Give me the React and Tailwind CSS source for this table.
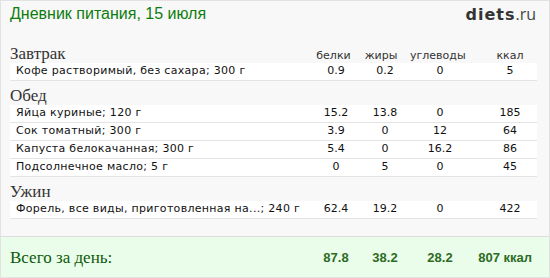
import React from "react";

const sections = [
  {
    title: "Завтрак",
    header: true,
    items: [["Кофе растворимый, без сахара; 300 г", "0.9", "0.2", "0", "5"]],
  },
  {
    title: "Обед",
    items: [
      ["Яйца куриные; 120 г", "15.2", "13.8", "0", "185"],
      ["Сок томатный; 300 г", "3.9", "0", "12", "64"],
      ["Капуста белокачанная; 300 г", "5.4", "0", "16.2", "86"],
      ["Подсолнечное масло; 5 г", "0", "5", "0", "45"],
    ],
  },
  {
    title: "Ужин",
    items: [
      ["Форель, все виды, приготовленная на...; 240 г", "62.4", "19.2", "0", "422"],
    ],
  },
];

const sans = "font-['DejaVu_Sans',sans-serif]";
const serif = "font-['Liberation_Serif',serif]";

const FoodRow = ({ item }) => (
  <div className={`h-[18px] bg-white border-b border-[#e4e4e4] flex items-center text-[11px] text-[#111] ${sans}`}>
    <div className="flex-1 pl-[6px] tracking-[0.3px] whitespace-nowrap">{item[0]}</div>
    <div className="w-[48px] text-center">{item[1]}</div>
    <div className="w-[50px] text-center">{item[2]}</div>
    <div className="w-[60px] text-center">{item[3]}</div>
    <div className="w-[67px] pl-[13px] text-center">{item[4]}</div>
  </div>
);

export default function App() {
  return (
    <div className="w-[550px] h-[278px] border border-[#e2e2e2] bg-[#f8f8f8] flex flex-col">
      {/* title + logo */}
      <div className="mt-[3px] h-[20px] flex items-center justify-between pl-[9px] pr-[13px]">
        <div className="font-['Liberation_Sans',sans-serif] text-[16px] leading-[20px] text-[#0d7d0d]">
          Дневник питания, 15 июля
        </div>
        <div className="leading-[20px] whitespace-nowrap">
          <span className="font-['DejaVu_Sans',sans-serif] font-bold text-[16px] tracking-[1px] text-[#333]">diets</span>
          <span className="font-['Open_Sans',sans-serif] text-[16px] text-[#444]">.ru</span>
        </div>
      </div>

      <div className="mt-[21px] pl-[9px] pr-[12px] flex flex-col gap-[6px]">
        {sections.map((s) => (
          <div key={s.title}>
            <div className="h-[18px] flex items-baseline">
              <div className={`flex-1 ${serif} text-[17px] leading-[18px] text-[#333]`}>{s.title}</div>
              {s.header && (
                <>
                  <div className={`w-[48px] text-center pr-[5px] text-[11px] text-[#333] ${sans}`}>белки</div>
                  <div className={`w-[50px] text-center pr-[8px] text-[11px] text-[#333] ${sans}`}>жиры</div>
                  <div className={`w-[60px] text-center pr-[10px] text-[11px] text-[#333] ${sans}`}>углеводы</div>
                  <div className={`w-[67px] text-center pl-[13px] text-[11px] text-[#333] ${sans}`}>ккал</div>
                </>
              )}
            </div>
            {s.items.map((it) => (
              <FoodRow key={it[0]} item={it} />
            ))}
          </div>
        ))}
      </div>

      {/* totals */}
      <div className="mt-auto h-[41px] border-t border-[#dcdcdc] bg-[#eafdea] flex items-center pl-[9px] pr-[12px] pt-[2px]">
        <div className={`flex-1 ${serif} text-[17px] text-[#0b5a0b]`}>Всего за день:</div>
        <div className="flex items-center font-['Liberation_Sans',sans-serif] font-bold text-[13px] text-[#2d6b1f]">
          <div className="w-[48px] text-center">87.8</div>
          <div className="w-[50px] text-center">38.2</div>
          <div className="w-[60px] text-center">28.2</div>
          <div className="w-[67px] text-right pr-[5px] whitespace-nowrap">807 ккал</div>
        </div>
      </div>
    </div>
  );
}
